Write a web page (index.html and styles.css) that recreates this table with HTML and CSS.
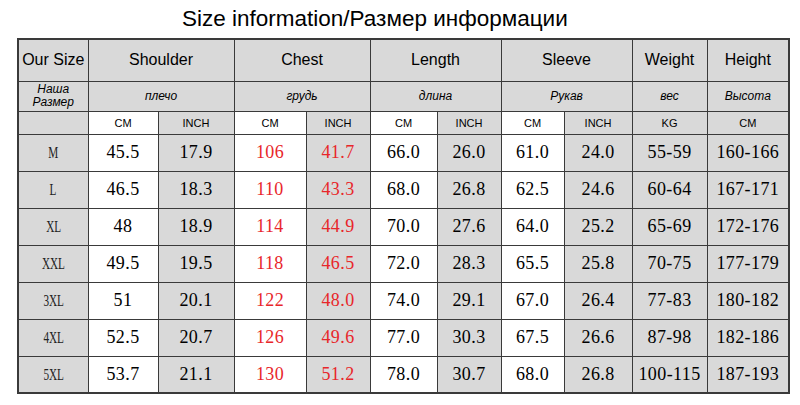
FILE: index.html
```html
<!DOCTYPE html>
<html>
<head>
<meta charset="utf-8">
<link rel="stylesheet" href="styles.css">
</head>
<body>
<div class="title">Size information/Размер информации</div>
<table class="chart">
  <colgroup>
    <col style="width:70px"><col style="width:70px"><col style="width:76px"><col style="width:72px"><col style="width:64px"><col style="width:67px"><col style="width:64px"><col style="width:63px"><col style="width:68px"><col style="width:75px"><col style="width:82px">
  </colgroup>
  <tr class="h1">
    <td class="g">Our Size</td>
    <td class="g" colspan="2">Shoulder</td>
    <td class="g" colspan="2">Chest</td>
    <td class="g" colspan="2">Length</td>
    <td class="g" colspan="2">Sleeve</td>
    <td class="g">Weight</td>
    <td class="g">Height</td>
  </tr>
  <tr class="h2">
    <td class="g">Наша<br>Размер</td>
    <td class="g" colspan="2">плечо</td>
    <td class="g" colspan="2">грудь</td>
    <td class="g" colspan="2">длина</td>
    <td class="g" colspan="2">Рукав</td>
    <td class="g">вес</td>
    <td class="g">Высота</td>
  </tr>
  <tr class="h3">
    <td class="g"></td>
    <td>CM</td><td class="g">INCH</td>
    <td>CM</td><td class="g">INCH</td>
    <td>CM</td><td class="g">INCH</td>
    <td>CM</td><td class="g">INCH</td>
    <td class="g">KG</td><td class="g">CM</td>
  </tr>
  <tr class="d">
    <td class="g sz"><span>M</span></td><td>45.5</td><td class="g">17.9</td><td class="red">106</td><td class="g red">41.7</td><td>66.0</td><td class="g">26.0</td><td>61.0</td><td class="g">24.0</td><td class="g">55-59</td><td class="g">160-166</td>
  </tr>
  <tr class="d">
    <td class="g sz"><span>L</span></td><td>46.5</td><td class="g">18.3</td><td class="red">110</td><td class="g red">43.3</td><td>68.0</td><td class="g">26.8</td><td>62.5</td><td class="g">24.6</td><td class="g">60-64</td><td class="g">167-171</td>
  </tr>
  <tr class="d">
    <td class="g sz"><span>XL</span></td><td>48</td><td class="g">18.9</td><td class="red">114</td><td class="g red">44.9</td><td>70.0</td><td class="g">27.6</td><td>64.0</td><td class="g">25.2</td><td class="g">65-69</td><td class="g">172-176</td>
  </tr>
  <tr class="d">
    <td class="g sz"><span>XXL</span></td><td>49.5</td><td class="g">19.5</td><td class="red">118</td><td class="g red">46.5</td><td>72.0</td><td class="g">28.3</td><td>65.5</td><td class="g">25.8</td><td class="g">70-75</td><td class="g">177-179</td>
  </tr>
  <tr class="d">
    <td class="g sz"><span>3XL</span></td><td>51</td><td class="g">20.1</td><td class="red">122</td><td class="g red">48.0</td><td>74.0</td><td class="g">29.1</td><td>67.0</td><td class="g">26.4</td><td class="g">77-83</td><td class="g">180-182</td>
  </tr>
  <tr class="d">
    <td class="g sz"><span>4XL</span></td><td>52.5</td><td class="g">20.7</td><td class="red">126</td><td class="g red">49.6</td><td>77.0</td><td class="g">30.3</td><td>67.5</td><td class="g">26.6</td><td class="g">87-98</td><td class="g">182-186</td>
  </tr>
  <tr class="d">
    <td class="g sz"><span>5XL</span></td><td>53.7</td><td class="g">21.1</td><td class="red">130</td><td class="g red">51.2</td><td>78.0</td><td class="g">30.7</td><td>68.0</td><td class="g">26.8</td><td class="g">100-115</td><td class="g">187-193</td>
  </tr>
</table>
</body>
</html>
```
FILE: styles.css
```css
html, body {
  margin: 0;
  padding: 0;
  background: #ffffff;
}
body {
  font-family: "Liberation Sans", Arial, sans-serif;
  color: #000;
}
.title {
  height: 38px;
  box-sizing: border-box;
  padding-top: 6px;
  padding-left: 182px;
  font-size: 22.5px;
  line-height: normal;
  white-space: nowrap;
}
.chart {
  margin-left: 17px;
  width: 771px;
  table-layout: fixed;
  border-collapse: collapse;
  border: 2px solid #3a3a3a;
}
.chart td {
  border: 1px solid #3a3a3a;
  padding: 0;
  text-align: center;
  vertical-align: middle;
  background: #ffffff;
  overflow: hidden;
  white-space: nowrap;
}
.chart td.g {
  background: #d9d9d9;
}
.h1 {
  height: 42px;
}
.h1 td {
  font-size: 16px;
}
.h2 {
  height: 30px;
}
.h2 td {
  font-size: 12px;
  font-style: italic;
  line-height: 13px;
}
.h3 {
  height: 23px;
}
.h3 td {
  font-size: 11px;
}
.d {
  height: 37px;
}
.d td {
  font-family: "Liberation Serif", "Times New Roman", serif;
  font-size: 18px;
  letter-spacing: 0.4px;
}
.d td.red {
  color: #e8262a;
}
.d td.sz span {
  display: inline-block;
  font-size: 16px;
  letter-spacing: 0;
  color: #222;
  transform: scaleX(0.7);
}
```
